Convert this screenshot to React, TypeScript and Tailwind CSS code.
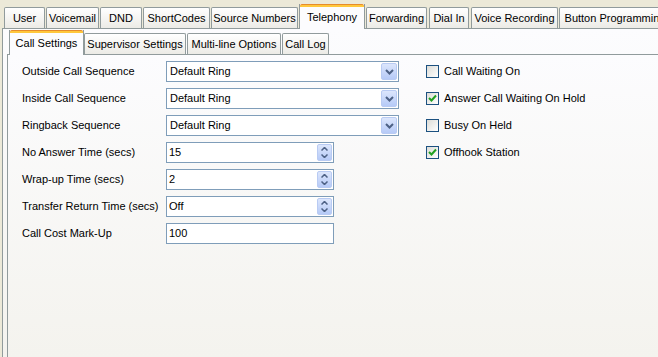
import React from 'react';

// widths / gaps measured from the reference strip
const outerTabs = [
  { label: 'User', w: 41, gap: 1 },
  { label: 'Voicemail', w: 53, gap: 1 },
  { label: 'DND', w: 42, gap: 1 },
  { label: 'ShortCodes', w: 67, gap: 1 },
  { label: 'Source Numbers', w: 87, gap: 1 },
  { label: 'Telephony', w: 66, gap: 1, active: true },
  { label: 'Forwarding', w: 61, gap: 2 },
  { label: 'Dial In', w: 40, gap: 2 },
  { label: 'Voice Recording', w: 87, gap: 1 },
  { label: 'Button Programming', w: 112, gap: 0 },
];

const innerTabs = [
  { label: 'Call Settings', w: 75, gap: 0, active: true },
  { label: 'Supervisor Settings', w: 102, gap: 1 },
  { label: 'Multi-line Options', w: 94, gap: 1 },
  { label: 'Call Log', w: 47, gap: 0 },
];

function Tab({ label, w, gap, active }: { label: string; w: number; gap: number; active?: boolean }) {
  if (active) {
    return (
      <div
        className="relative z-10 -mb-px h-[25px] shrink-0 whitespace-nowrap border-x border-[#919B9C] bg-[#fcfcfe] text-center leading-[20px]"
        style={{ width: w, marginRight: gap }}
      >
        <div className="h-[3px] rounded-t-[2px] border-t border-[#E68B2C] bg-[#FFC83C]" />
        {label}
      </div>
    );
  }
  return (
    <div
      className="h-[21px] shrink-0 whitespace-nowrap rounded-t-[2px] border border-b-0 border-[#919B9C] bg-gradient-to-b from-white to-[#ECEBE6] text-center leading-[20px]"
      style={{ width: w, marginRight: gap }}
    >
      {label}
    </div>
  );
}

function Chevron() {
  return (
    <svg width="9" height="6" viewBox="0 0 9 6">
      <path d="M1 1 L4.5 4.5 L8 1" stroke="#4D6185" strokeWidth="2" fill="none" />
    </svg>
  );
}

function Dropdown({ value }: { value: string }) {
  return (
    <div className="flex h-[21px] w-[233px] items-center border border-[#7F9DB9] bg-white">
      <span className="flex-1 pl-[3px]">{value}</span>
      <div className="mr-px flex h-[17px] w-[16px] items-center justify-center rounded-[2px] border border-[#B9CBF3] bg-gradient-to-b from-[#DCE6FC] to-[#B6CAF7]">
        <Chevron />
      </div>
    </div>
  );
}

function Spinner({ value }: { value: string }) {
  return (
    <div className="flex h-[21px] w-[168px] items-center border border-[#7F9DB9] bg-white">
      <span className="flex-1 pl-[2px]">{value}</span>
      <div className="mr-px flex h-[17px] w-[15px] flex-col items-center justify-center gap-[3px] rounded-[2px] border border-[#B9CBF3] bg-gradient-to-b from-[#DCE6FC] to-[#B6CAF7]">
        <svg width="7" height="4" viewBox="0 0 7 4">
          <path d="M0.5 3.5 L3.5 0.5 L6.5 3.5" stroke="#4D6185" strokeWidth="1.5" fill="none" />
        </svg>
        <svg width="7" height="4" viewBox="0 0 7 4">
          <path d="M0.5 0.5 L3.5 3.5 L6.5 0.5" stroke="#4D6185" strokeWidth="1.5" fill="none" />
        </svg>
      </div>
    </div>
  );
}

function Checkbox({ label, checked }: { label: string; checked?: boolean }) {
  return (
    <div className="flex h-[21px] items-center gap-[5px]">
      <div className="flex h-[13px] w-[13px] items-center justify-center border border-[#1C5180] bg-gradient-to-br from-[#DCDCD7] to-white">
        {checked && (
          <svg width="9" height="9" viewBox="0 0 9 9">
            <path d="M1 4 L3.5 6.5 L8 1.5" stroke="#21A121" strokeWidth="2" fill="none" />
          </svg>
        )}
      </div>
      <span>{label}</span>
    </div>
  );
}

const fields = [
  { label: 'Outside Call Sequence', kind: 'drop', value: 'Default Ring' },
  { label: 'Inside Call Sequence', kind: 'drop', value: 'Default Ring' },
  { label: 'Ringback Sequence', kind: 'drop', value: 'Default Ring' },
  { label: 'No Answer Time (secs)', kind: 'spin', value: '15' },
  { label: 'Wrap-up Time (secs)', kind: 'spin', value: '2' },
  { label: 'Transfer Return Time (secs)', kind: 'spin', value: 'Off' },
  { label: 'Call Cost Mark-Up', kind: 'text', value: '100' },
];

export default function App() {
  return (
    <div
      className="flex h-[357px] w-[658px] flex-col overflow-hidden bg-[#ECE9D8] text-[11px] text-black"
      style={{ fontFamily: '"Liberation Sans", Arial, sans-serif' }}
    >
      {/* top tabs */}
      <div className="flex h-[28px] items-end pl-[4px]">
        {outerTabs.map((t) => (
          <Tab key={t.label} {...t} />
        ))}
      </div>

      {/* telephony panel */}
      <div className="ml-[2px] flex flex-1 flex-col border-l border-t border-[#919B9C] bg-gradient-to-b from-[#fcfcfe] to-[#f4f3ee] pl-[4px]">
        <div className="flex h-[25px] items-end pl-[2px]">
          {innerTabs.map((t) => (
            <Tab key={t.label} {...t} />
          ))}
        </div>

        <div className="flex flex-1 border-l border-t border-[#919B9C] bg-gradient-to-b from-[#fcfcfe] to-[#f4f3ee] pl-[14px] pt-[6px]">
          <div className="flex flex-col gap-[6px]">
            {fields.map((f) => (
              <div key={f.label} className="flex h-[21px] items-center">
                <span className="w-[144px]">{f.label}</span>
                {f.kind === 'drop' && <Dropdown value={f.value} />}
                {f.kind === 'spin' && <Spinner value={f.value} />}
                {f.kind === 'text' && (
                  <div className="flex h-[21px] w-[168px] items-center border border-[#7F9DB9] bg-white pl-[2px]">
                    {f.value}
                  </div>
                )}
              </div>
            ))}
          </div>

          <div className="ml-[27px] flex flex-col gap-[6px]">
            <Checkbox label="Call Waiting On" />
            <Checkbox label="Answer Call Waiting On Hold" checked />
            <Checkbox label="Busy On Held" />
            <Checkbox label="Offhook Station" checked />
          </div>
        </div>
      </div>
    </div>
  );
}
